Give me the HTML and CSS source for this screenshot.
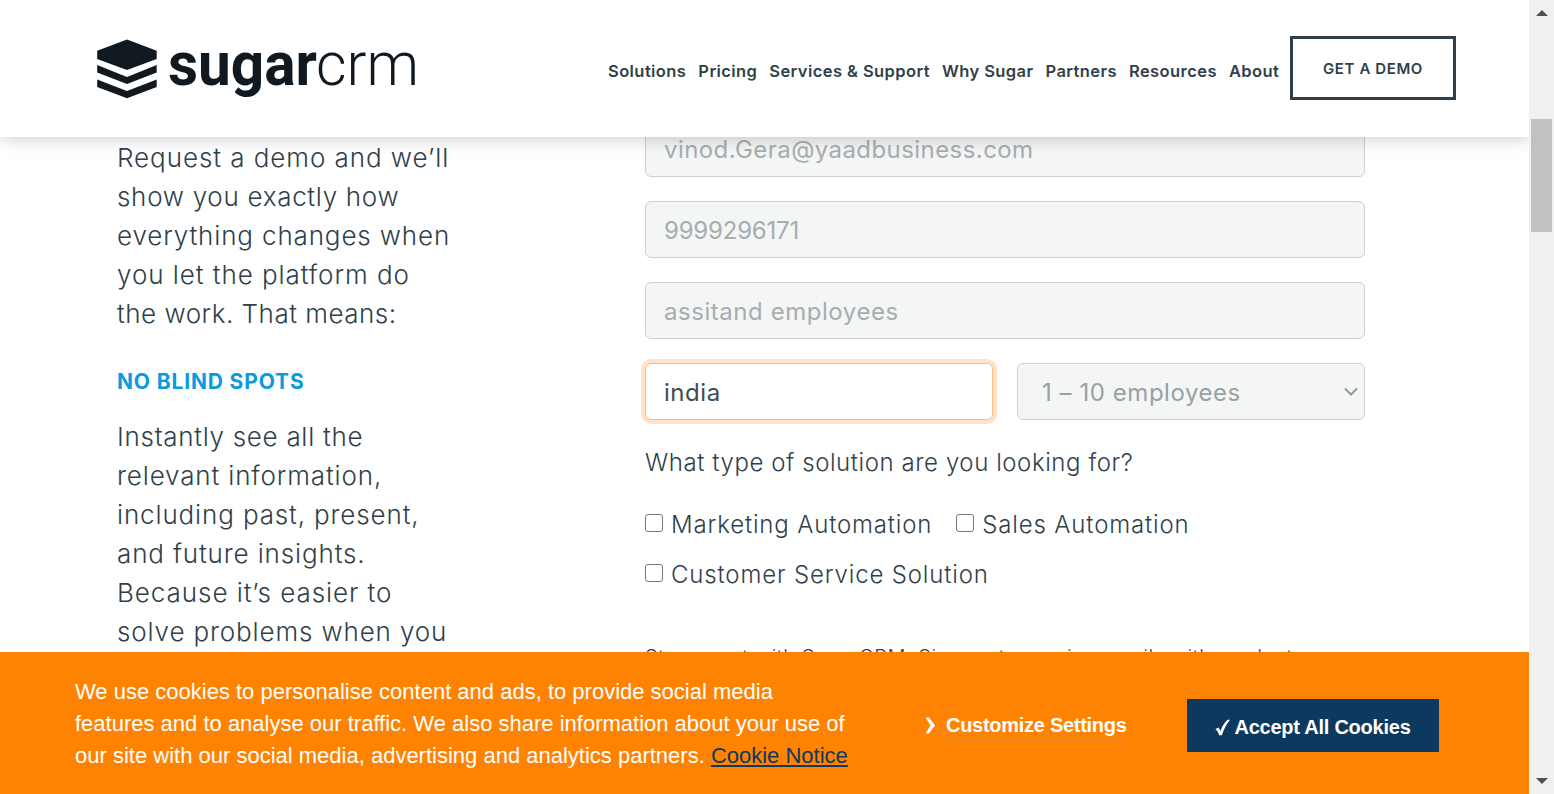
FILE: index.html
```
<!DOCTYPE html>
<html lang="en">
<head>
<meta charset="utf-8">
<title>SugarCRM</title>
<link rel="stylesheet" href="styles.css">
</head>
<body>
<div class="page">
  <header class="header">
    <svg class="logo" width="324" height="70" viewBox="0 0 324 70" role="img" aria-label="sugarcrm">
      <g fill="#101920">
        <path d="M31 4.500 60.700 15.700V24L31 35 1.200 24V15.700z"/>
        <path d="M1.200 30 31 42 60.700 30V37.500L31 49 1.200 37.500z"/>
        <path d="M1.200 44.500 31 56 60.700 44.500V52L31 63.300 1.200 52z"/>
        <text class="logo-bold" x="72" y="50" textLength="149" lengthAdjust="spacingAndGlyphs">sugar</text>
        <text class="logo-thin" x="220" y="50" textLength="103" lengthAdjust="spacingAndGlyphs">crm</text>
      </g>
    </svg>
    <nav class="nav">
      <a>Solutions</a><a>Pricing</a><a>Services &amp; Support</a><a>Why Sugar</a><a>Partners</a><a>Resources</a><a>About</a>
    </nav>
    <a class="demo">GET A DEMO</a>
  </header>
  <main class="main">
    <section class="intro">
      <p class="copy"><span class="wide">Request a demo and we’ll</span><span class="snug">show you exactly how</span><span>everything changes when</span><span class="wide">you let the platform do</span><span class="tight">the work. That means:</span></p>
      <h2 class="heading">NO BLIND SPOTS</h2>
      <p class="copy"><span class="snug">Instantly see all the</span><span>relevant information,</span><span>including past, present,</span><span>and future insights.</span><span class="wide">Because it’s easier to</span><span>solve problems when you</span></p>
    </section>
    <form class="form">
      <div class="field email">vinod.Gera@yaadbusiness.com</div>
      <div class="field digits">9999296171</div>
      <div class="field">assitand employees</div>
      <div class="row">
        <div class="field focused">india</div>
        <div class="field select"><span>1 – 10 employees</span>
          <svg width="16" height="10" viewBox="0 0 16 10"><path d="M2 1.500 8 7.500 14 1.500" fill="none" stroke="#8f999c" stroke-width="2"/></svg>
        </div>
      </div>
      <p class="question">What type of solution are you looking for?</p>
      <div class="checks">
        <label><i class="box"></i>Marketing Automation</label>
        <label><i class="box"></i>Sales Automation</label>
        <label><i class="box"></i>Customer Service Solution</label>
      </div>
      <p class="fine">Stay smart with SugarCRM. Sign up to receive emails with product</p>
    </form>
  </main>
  <footer class="cookies">
    <p class="cookie-text">We use cookies to personalise content and ads, to provide social media<br>features and to analyse our traffic. We also share information about your use of<br>our site with our social media, advertising and analytics partners. <a>Cookie Notice</a></p>
    <div class="customize">
      <svg width="10" height="17" viewBox="0 0 10 17"><path d="M.500.500H4L10 8.500 4 16.500H.500L5.500 8.500z" fill="#fff"/></svg>
      <a>Customize Settings</a>
    </div>
    <a class="accept">
      <svg width="15" height="17" viewBox="0 0 15 17"><path d="M.500 10 3.500 8.500 5.500 12Q8 5 12.500.800H15Q10 7 6.800 16.300H4.200Q2.800 12 .500 10z" fill="#fff"/></svg>
      <span>Accept All Cookies</span>
    </a>
  </footer>
</div>
<div class="scrollbar">
  <svg width="12" height="6" viewBox="0 0 12 6"><path d="M6 0 12 6H0z" fill="#505050"/></svg>
  <div class="thumb"></div>
  <svg width="12" height="6" viewBox="0 0 12 6"><path d="M0 0H12L6 6z" fill="#505050"/></svg>
</div>
</body>
</html>
```
FILE: styles.css
```
* { box-sizing: border-box; }
body {
  margin: 0;
  height: 794px;
  display: flex;
  overflow: hidden;
  background: #fff;
  color: #303f49;
  font-family: Inter, sans-serif;
}
p, h2 { margin: 0; }
.page { width: 1529px; height: 794px; display: flex; flex-direction: column; overflow: hidden; }

.header {
  position: relative;
  z-index: 1;
  flex: none;
  height: 137px;
  display: flex;
  align-items: flex-start;
  padding: 35px 0 0 96px;
  background: #fff;
  box-shadow: 0 2px 16px rgba(0, 0, 0, .2);
}
.logo { display: block; margin-right: 188px; overflow: visible; }
.logo-bold { font: 700 61px Roboto, sans-serif; }
.logo-thin { font: 300 61px Roboto, sans-serif; }
.nav {
  display: flex;
  gap: 12px;
  width: 682px;
  padding-top: 26px;
  font-size: 16.500px;
  font-weight: 600;
  line-height: 20px;
  letter-spacing: .42px;
  white-space: nowrap;
}
.demo {
  width: 166px;
  height: 64px;
  margin-top: 1px;
  border: 3px solid #303f49;
  text-align: center;
  font-size: 15px;
  font-weight: 600;
  line-height: 59px;
  letter-spacing: .6px;
}

.main { flex: none; height: 515px; display: flex; overflow: hidden; }
.intro { width: 645px; padding: 1px 0 0 117px; }
.copy {
  font-size: 26px;
  font-weight: 300;
  line-height: 39px;
  letter-spacing: .86px;
  white-space: nowrap;
}
.copy span { display: block; }
.copy .snug { letter-spacing: .7px; }
.copy .tight { letter-spacing: .5px; }
.copy .wide { letter-spacing: .94px; }
.heading {
  margin: 34px 0 20px;
  color: #0a9ade;
  font-size: 21px;
  font-weight: 700;
  line-height: 30px;
  letter-spacing: .85px;
  white-space: nowrap;
}

.form { width: 720px; margin-top: -17px; }
.field {
  height: 57px;
  margin-bottom: 24px;
  padding-left: 18px;
  border: 1px solid #cbd0d8;
  border-radius: 6px;
  background: #f4f6f5;
  color: #a6adb1;
  font-size: 24px;
  line-height: 57px;
  letter-spacing: .55px;
  white-space: nowrap;
}
.email { letter-spacing: .43px; }
.digits { letter-spacing: -.2px; }
.row { display: flex; gap: 24px; }
.row .field { width: 348px; margin: 0; }
.row .focused {
  border-color: #ffbf80;
  background: #fff;
  color: #414c54;
  box-shadow: 0 0 0 4px #ffe3c8;
}
.row .select {
  display: flex;
  justify-content: space-between;
  align-items: center;
  padding: 0 5px 0 24px;
  border-color: #d2d0cb;
  color: #98a1a3;
}
.select span { padding-top: 2px; }
.question {
  margin-top: 25px;
  font-size: 24px;
  font-weight: 300;
  line-height: 36px;
  letter-spacing: .57px;
  white-space: nowrap;
}
.checks {
  display: flex;
  flex-wrap: wrap;
  column-gap: 24px;
  margin-top: 19px;
  font-size: 24px;
  font-weight: 300;
  line-height: 50px;
  letter-spacing: .84px;
  white-space: nowrap;
}
.checks label { display: flex; align-items: center; gap: 8px; }
.box {
  width: 18px;
  height: 18px;
  margin-bottom: 4px;
  border: 1.500px solid #767676;
  border-radius: 3px;
}
.fine {
  margin-top: 42px;
  font-size: 20px;
  font-weight: 300;
  line-height: 30px;
  letter-spacing: .53px;
  white-space: nowrap;
}

.cookies {
  position: relative;
  z-index: 1;
  flex: none;
  height: 142px;
  display: flex;
  align-items: flex-start;
  padding: 24px 0 0 75px;
  background: #ff8303;
  color: #fff;
  font-family: "Liberation Sans", sans-serif;
}
.cookie-text { width: 850px; font-size: 22px; line-height: 32px; white-space: nowrap; }
.cookie-text a { color: #0d395f; text-decoration: underline; }
.customize {
  width: 262px;
  display: flex;
  align-items: center;
  gap: 11px;
  padding-top: 34px;
  font-size: 20px;
  font-weight: 700;
  line-height: 30px;
  letter-spacing: -.28px;
}
.customize a { border-bottom: 1px solid #e98a2b; white-space: nowrap; }
.accept {
  width: 252px;
  height: 53px;
  margin-top: 23px;
  display: flex;
  align-items: center;
  justify-content: center;
  gap: 4px;
  padding-top: 3px;
  background: #0d395f;
  font-size: 20px;
  font-weight: 700;
  letter-spacing: -.24px;
  white-space: nowrap;
}

.scrollbar {
  width: 25px;
  height: 794px;
  display: flex;
  flex-direction: column;
  align-items: center;
  padding: 10px 0;
  background: #f0f0f0;
}
.thumb { width: 21px; height: 113px; margin: 103px 0 auto; background: #c1c1c1; }
```
